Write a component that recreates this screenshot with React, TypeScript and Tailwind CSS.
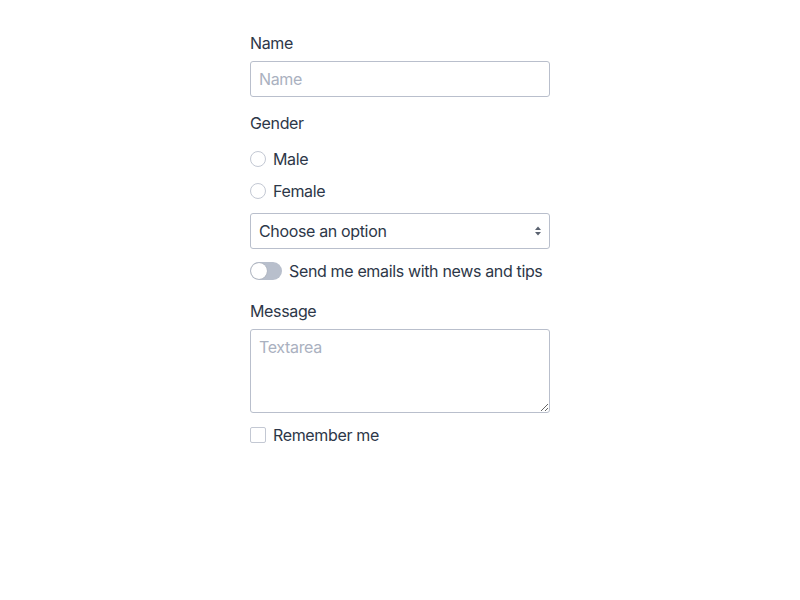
import React, { useState } from 'react';

export default function App() {
  const [emails, setEmails] = useState(false);

  return (
    <div className="min-h-screen bg-white font-['Inter','Liberation_Sans',sans-serif] text-[16px] tracking-[-0.35px] text-[#2d3748]">
      <form className="mx-auto w-[300px] pt-[31px]">
        <label className="block h-6 leading-6">Name</label>
        <input
          type="text"
          placeholder="Name"
          className="mt-[6px] block h-9 w-full rounded-[3px] border border-[#b9bfcc] px-2 text-[16px] outline-none placeholder:text-[#aab1c0]"
        />

        <div className="mt-[14px] h-6 leading-6">Gender</div>
        <label className="mt-[12px] flex h-6 items-center gap-[7px]">
          <span className="h-4 w-4 rounded-full border border-[#c3c8d3]" />
          <span>Male</span>
        </label>
        <label className="mt-[8px] flex h-6 items-center gap-[7px]">
          <span className="h-4 w-4 rounded-full border border-[#c3c8d3]" />
          <span>Female</span>
        </label>

        <div className="relative mt-[10px] h-9 w-full rounded-[3px] border border-[#b9bfcc]">
          <div className="flex h-full items-center px-2">Choose an option</div>
          <svg className="absolute right-[6px] top-1/2 -translate-y-1/2" width="10" height="12" viewBox="0 0 10 12">
            <path d="M5 1.5 L8 5 L2 5 Z" fill="#5a6270" />
            <path d="M5 10.5 L8 7 L2 7 Z" fill="#5a6270" />
          </svg>
        </div>

        <label className="mt-[10px] flex h-6 items-center gap-[7px] whitespace-nowrap cursor-pointer" onClick={() => setEmails(!emails)}>
          <span className={'relative h-[18px] w-8 shrink-0 rounded-full ' + (emails ? 'bg-[#4a5568]' : 'bg-[#b8bfcc]')}>
            <span
              className={'absolute top-[1px] h-4 w-4 rounded-full bg-white shadow-[0_0_1px_rgba(0,0,0,0.3)] ' + (emails ? 'left-[15px]' : 'left-[1px]')}
            />
          </span>
          <span>Send me emails with news and tips</span>
        </label>

        <div className="mt-[16px] h-6 leading-6">Message</div>
        <textarea
          placeholder="Textarea"
          className="mt-[6px] block h-[84px] w-full rounded-[3px] border border-[#b9bfcc] px-2 py-[5px] text-[16px] leading-6 outline-none placeholder:text-[#aab1c0]"
        />

        <label className="mt-[10px] flex h-6 items-center gap-[7px]">
          <span className="h-4 w-4 rounded-[2px] border border-[#c3c8d3]" />
          <span>Remember me</span>
        </label>
      </form>
    </div>
  );
}
